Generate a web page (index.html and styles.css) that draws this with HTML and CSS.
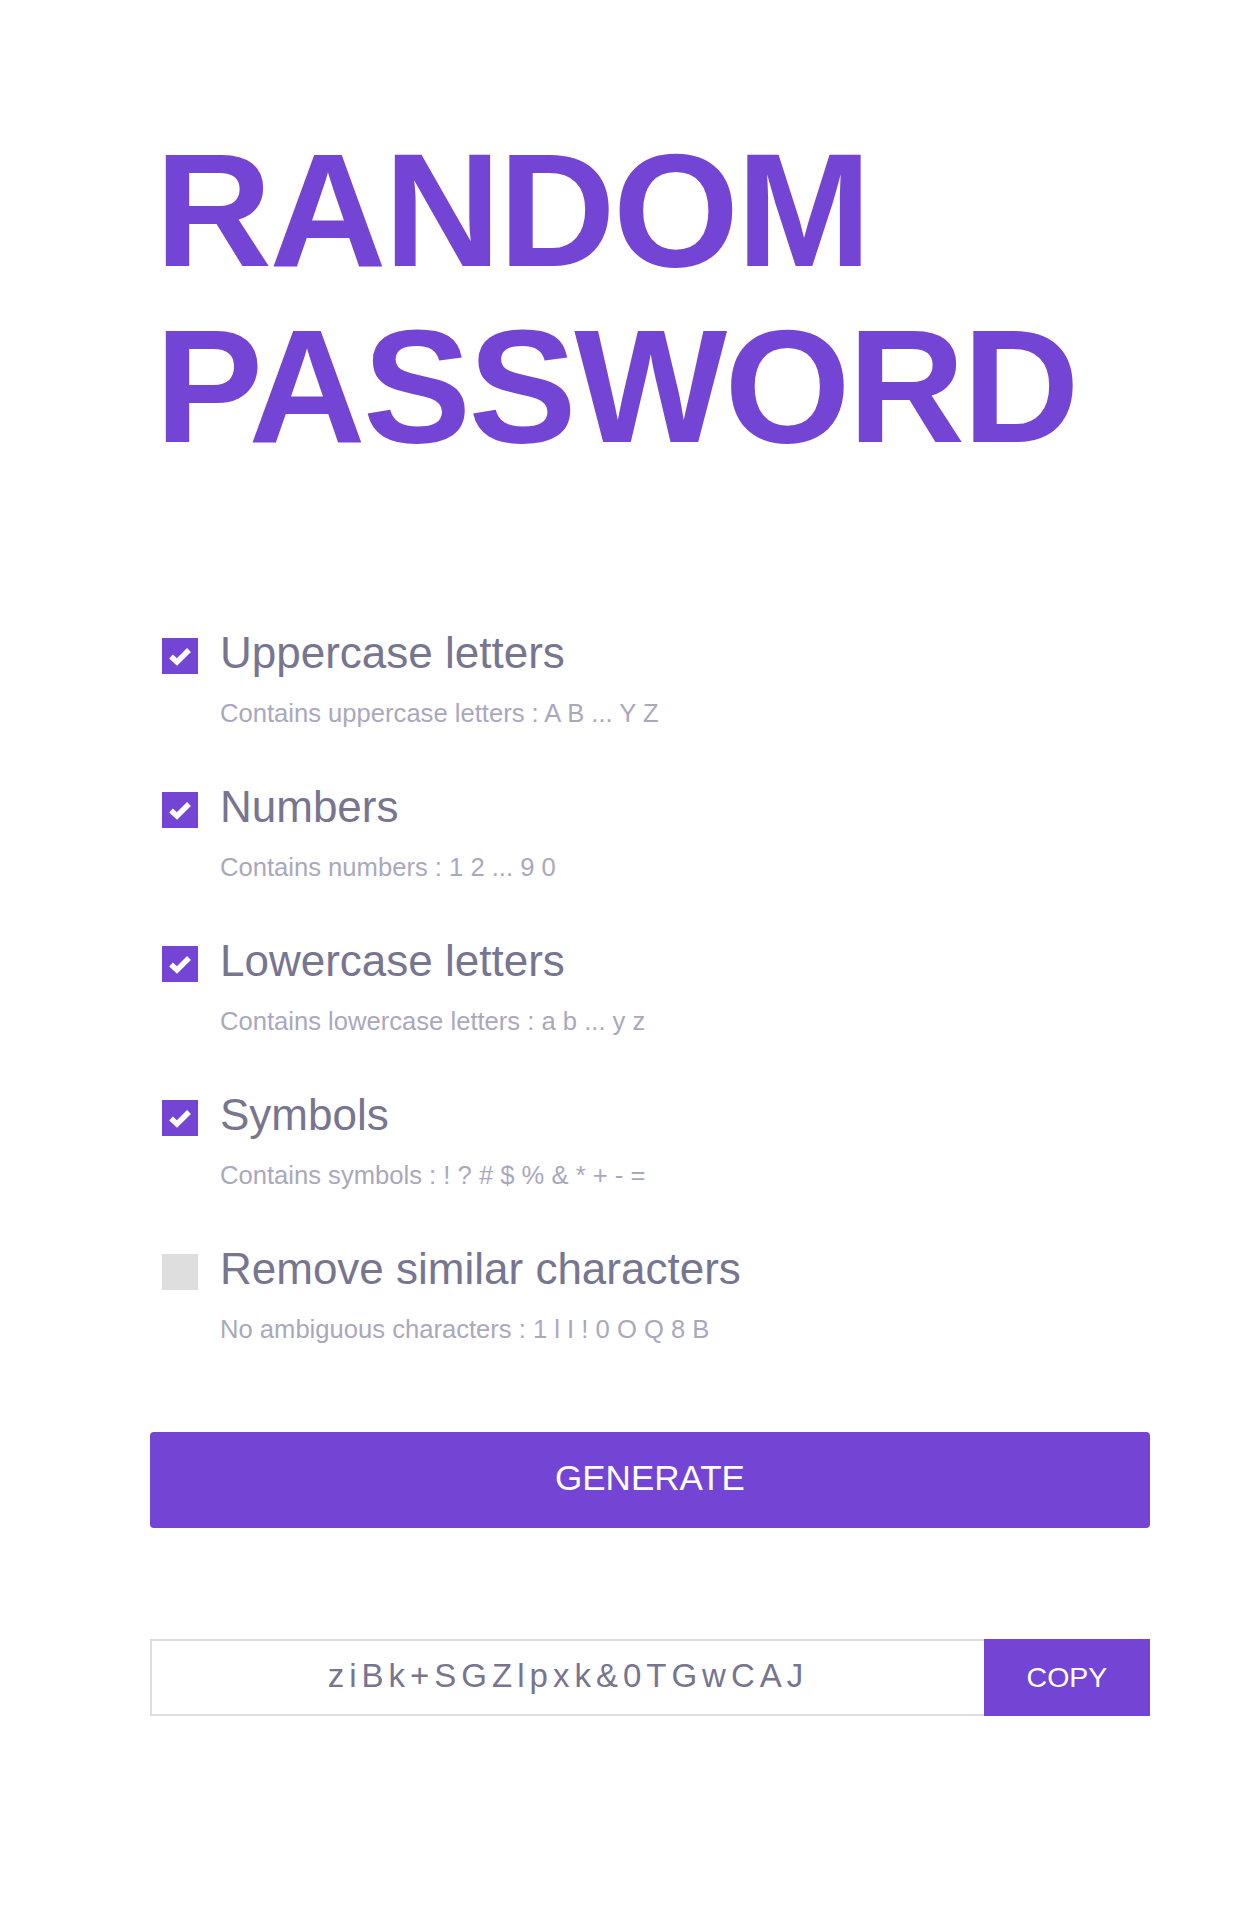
FILE: index.html
```html
<!DOCTYPE html>
<html lang="en">
<head>
<meta charset="utf-8">
<title>Random Password</title>
<link rel="stylesheet" href="styles.css">
</head>
<body>
<main class="app">
  <h1 class="title">RANDOM<br>PASSWORD</h1>

  <ul class="options">
    <li class="option">
      <span class="box checked"><svg viewBox="0 0 36 36" width="36" height="36"><polyline points="9,18.5 15,24 27,12" fill="none" stroke="#fff" stroke-width="5.5"/></svg></span>
      <div class="text">
        <div class="label">Uppercase letters</div>
        <div class="desc">Contains uppercase letters : A B ... Y Z</div>
      </div>
    </li>
    <li class="option">
      <span class="box checked"><svg viewBox="0 0 36 36" width="36" height="36"><polyline points="9,18.5 15,24 27,12" fill="none" stroke="#fff" stroke-width="5.5"/></svg></span>
      <div class="text">
        <div class="label">Numbers</div>
        <div class="desc">Contains numbers : 1 2 ... 9 0</div>
      </div>
    </li>
    <li class="option">
      <span class="box checked"><svg viewBox="0 0 36 36" width="36" height="36"><polyline points="9,18.5 15,24 27,12" fill="none" stroke="#fff" stroke-width="5.5"/></svg></span>
      <div class="text">
        <div class="label">Lowercase letters</div>
        <div class="desc">Contains lowercase letters : a b ... y z</div>
      </div>
    </li>
    <li class="option">
      <span class="box checked"><svg viewBox="0 0 36 36" width="36" height="36"><polyline points="9,18.5 15,24 27,12" fill="none" stroke="#fff" stroke-width="5.5"/></svg></span>
      <div class="text">
        <div class="label">Symbols</div>
        <div class="desc">Contains symbols : ! ? # $ % &amp; * + - =</div>
      </div>
    </li>
    <li class="option">
      <span class="box"></span>
      <div class="text">
        <div class="label">Remove similar characters</div>
        <div class="desc">No ambiguous characters : 1 l I ! 0 O Q 8 B</div>
      </div>
    </li>
  </ul>

  <button class="generate">GENERATE</button>

  <div class="result">
    <div class="password">ziBk+SGZlpxk&amp;0TGwCAJ</div>
    <button class="copy">COPY</button>
  </div>
</main>
</body>
</html>
```

FILE: styles.css
```css
html, body {
  margin: 0;
  padding: 0;
  background: #ffffff;
}

body {
  font-family: "Liberation Sans", Arial, Helvetica, sans-serif;
}

.app {
  width: 1000px;
  margin-left: 150px;
  padding-top: 122px;
  padding-bottom: 190px;
}

.title {
  margin: 0;
  padding-left: 5px;
  font-size: 162px;
  line-height: 176px;
  font-weight: 700;
  color: #7444d4;
  letter-spacing: -2.5px;
}

.options {
  list-style: none;
  margin: 151px 0 0 0;
  padding: 0 0 0 12px;
  display: flex;
  flex-direction: column;
  gap: 50px;
}

.option {
  display: flex;
  align-items: flex-start;
  gap: 22px;
}

.box {
  flex: none;
  width: 36px;
  height: 36px;
  margin-top: 13px;
  background: #dedede;
  display: block;
}

.box svg {
  display: block;
}

.box.checked {
  background: #7444d4;
}

.text {
  display: flex;
  flex-direction: column;
  gap: 18px;
  padding-top: 2px;
}

.label {
  font-size: 44px;
  line-height: 52.8px;
  color: #77758f;
}

.desc {
  font-size: 25.6px;
  line-height: 31.2px;
  color: #aaa8bc;
}

.generate {
  display: flex;
  align-items: center;
  justify-content: center;
  width: 1000px;
  height: 96px;
  margin-top: 87px;
  border: none;
  border-radius: 4px;
  background: #7444d4;
  color: #ffffff;
  font-family: "Liberation Sans", Arial, sans-serif;
  font-size: 35px;
  padding: 0 0 4px 0;
}

.result {
  display: flex;
  margin-top: 111px;
  height: 77px;
}

.password {
  flex: 1;
  display: flex;
  align-items: center;
  justify-content: center;
  border: 2px solid #dddddd;
  border-right: none;
  color: #77758f;
  font-size: 33px;
  letter-spacing: 5px;
  padding-bottom: 3px;
}

.copy {
  flex: none;
  width: 166px;
  border: none;
  background: #7444d4;
  color: #ffffff;
  font-family: "Liberation Sans", Arial, sans-serif;
  font-size: 28.5px;
  padding: 0;
}
```
